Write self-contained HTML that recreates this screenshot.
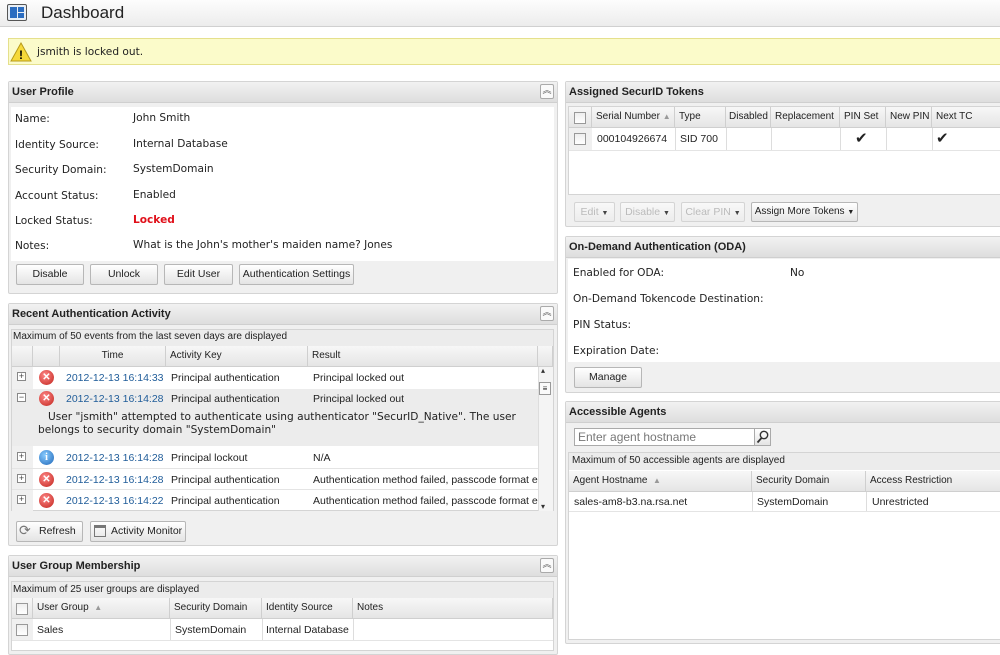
<!DOCTYPE html>
<html><head><meta charset="utf-8"><style>
*{box-sizing:border-box;margin:0;padding:0}
body{width:1000px;height:651px;background:#fff;position:relative;overflow:hidden;font-family:"Liberation Sans",sans-serif;font-size:10.5px;color:#222}
.a{position:absolute}
.v{font-family:"DejaVu Sans",sans-serif;font-size:10.6px}
.panel{position:absolute;border:1px solid #d4d4d4;background:#f0f0f0;border-radius:2px}
.ph{position:absolute;left:0;right:0;top:0;height:21px;background:linear-gradient(#f2f2f2,#dedede);border-bottom:1px solid #cfcfcf;font-weight:bold;font-size:11px;padding:4px 3px;color:#222;white-space:nowrap}
.col{position:absolute;right:3px;top:2px;width:14px;height:15px;border:1px solid #aaa;background:#fafafa;border-radius:2px;font-size:9px;text-align:center;line-height:11px;color:#555}
.btn{position:absolute;height:21px;border:1px solid #b7b7b7;border-radius:2px;background:linear-gradient(#fff,#e4e4e4);text-align:center;line-height:19px;font-size:10.5px;color:#222;white-space:nowrap;overflow:hidden}
.dis{color:#bbb;border-color:#d4d4d4;background:linear-gradient(#f8f8f8,#ececec)}
.th{position:absolute;height:21px;background:linear-gradient(#f7f7f7,#e5e5e5);border-right:1px solid #cfcfcf;border-bottom:1px solid #cfcfcf;line-height:20px;padding-left:4px;white-space:nowrap;overflow:hidden;font-size:10px}
.cb{position:absolute;width:12px;height:12px;border:1px solid #999;background:linear-gradient(#eee,#fff)}
.t{position:absolute;white-space:nowrap}
.lnk{color:#1f5c99}
.x{position:absolute;width:15px;height:15px;border-radius:50%;background:radial-gradient(circle at 40% 35%,#f88,#c0231b);color:#fff;font-size:10px;font-weight:bold;text-align:center;line-height:15px}
.i{position:absolute;width:15px;height:15px;border-radius:50%;background:radial-gradient(circle at 40% 35%,#8cf,#1f66b8);color:#fff;font-size:10px;font-weight:bold;text-align:center;line-height:15px;font-family:"Liberation Serif",serif}
.pm{position:absolute;width:9px;height:9px;border:1px solid #888;background:#fff;font-size:9px;line-height:7px;text-align:center;color:#444}
</style></head><body>
<div class="a" style="left:0;top:0;width:1000px;height:27px;background:linear-gradient(#fdfdfd,#ececec);border-bottom:1px solid #d0d0d0"></div>
<div class="a" style="left:7px;top:4px;width:20px;height:17px;border:1px solid #555;background:#e8eef5;border-radius:2px">
 <div class="a" style="left:2px;top:2px;width:7px;height:11px;background:#2a6cc0"></div>
 <div class="a" style="left:10px;top:2px;width:6px;height:5px;background:#2a6cc0"></div>
 <div class="a" style="left:10px;top:8px;width:6px;height:5px;background:#2a6cc0"></div>
</div>
<div class="t" style="left:41px;top:3px;font-size:17px;color:#222">Dashboard</div>
<div class="a" style="left:8px;top:38px;width:995px;height:27px;background:#fbfbca;border:1px solid #e5e08c"></div>
<svg class="a" style="left:10px;top:42px" width="22" height="20"><path d="M11 1 L21 19 L1 19 Z" fill="#f6d93a" stroke="#b79a1a"/><text x="11" y="17" text-anchor="middle" font-size="12" font-weight="bold" font-family="Liberation Sans">!</text></svg>
<div class="t v" style="left:37px;top:46px">jsmith is locked out.</div>

<div class="panel" style="left:8px;top:81px;width:550px;height:213px">
 <div class="ph">User Profile</div><div class="col">︽</div>
 <div class="a" style="left:2px;top:25px;right:3px;height:154px;background:#fff"></div>
</div>
<div class="t v" style="left:15px;top:113px">Name:</div><div class="t v" style="left:133px;top:112px">John Smith</div>
<div class="t v" style="left:15px;top:139px">Identity Source:</div><div class="t v" style="left:133px;top:138px">Internal Database</div>
<div class="t v" style="left:15px;top:164px">Security Domain:</div><div class="t v" style="left:133px;top:163px">SystemDomain</div>
<div class="t v" style="left:15px;top:190px">Account Status:</div><div class="t v" style="left:133px;top:189px">Enabled</div>
<div class="t v" style="left:15px;top:215px">Locked Status:</div><div class="t v" style="left:133px;top:214px;color:#e0101a;font-weight:bold">Locked</div>
<div class="t v" style="left:15px;top:240px">Notes:</div><div class="t v" style="left:133px;top:239px">What is the John's mother's maiden name? Jones</div>
<div class="btn" style="left:16px;top:264px;width:68px">Disable</div>
<div class="btn" style="left:90px;top:264px;width:68px">Unlock</div>
<div class="btn" style="left:164px;top:264px;width:69px">Edit User</div>
<div class="btn" style="left:239px;top:264px;width:115px">Authentication Settings</div>

<div class="panel" style="left:8px;top:303px;width:550px;height:243px">
 <div class="ph">Recent Authentication Activity</div><div class="col">︽</div>
</div>
<div class="a" style="left:11px;top:329px;width:543px;height:182px;background:#fff;border:1px solid #d4d4d4"></div>
<div class="a" style="left:12px;top:330px;width:541px;height:16px;background:#ececec"></div>
<div class="t" style="left:13px;top:331px;font-size:10px">Maximum of 50 events from the last seven days are displayed</div>
<div class="th" style="left:12px;top:346px;width:21px"></div>
<div class="th" style="left:33px;top:346px;width:27px"></div>
<div class="th" style="left:60px;top:346px;width:106px;text-align:center;padding:0">Time</div>
<div class="th" style="left:166px;top:346px;width:142px">Activity Key</div>
<div class="th" style="left:308px;top:346px;width:230px">Result</div>
<div class="th" style="left:538px;top:346px;width:15px"></div>
<div class="a" style="left:12px;top:367px;width:21px;height:144px;background:#f0f0f0"></div>
<div class="a" style="left:12px;top:389px;width:526px;height:57px;background:#ececec"></div>
<div class="a" style="left:12px;top:468px;width:526px;height:1px;background:#e4e4e4"></div>
<div class="a" style="left:12px;top:489px;width:526px;height:1px;background:#e4e4e4"></div>
<div class="a" style="left:538px;top:367px;width:15px;height:144px;background:#f4f4f4;border-left:1px solid #ddd"></div>
<div class="t" style="left:541px;top:366px;font-size:8px;color:#333">▴</div>
<div class="a" style="left:539px;top:382px;width:12px;height:13px;border:1px solid #999;background:#fafafa;font-size:8px;text-align:center;line-height:11px">≡</div>
<div class="t" style="left:541px;top:502px;font-size:8px;color:#333">▾</div>
<div class="pm" style="left:17px;top:372px">+</div><div class="x" style="left:39px;top:370px">✕</div>
<div class="t lnk" style="left:66px;top:372px">2012-12-13 16:14:33</div><div class="t" style="left:171px;top:372px">Principal authentication</div><div class="t" style="left:313px;top:372px">Principal locked out</div>
<div class="pm" style="left:17px;top:393px">−</div><div class="x" style="left:39px;top:391px">✕</div>
<div class="t lnk" style="left:66px;top:393px">2012-12-13 16:14:28</div><div class="t" style="left:171px;top:393px">Principal authentication</div><div class="t" style="left:313px;top:393px">Principal locked out</div>
<div class="t v" style="left:48px;top:411px">User "jsmith" attempted to authenticate using authenticator "SecurID_Native". The user</div>
<div class="t v" style="left:38px;top:424px">belongs to security domain "SystemDomain"</div>
<div class="pm" style="left:17px;top:452px">+</div><div class="i" style="left:39px;top:450px">i</div>
<div class="t lnk" style="left:66px;top:452px">2012-12-13 16:14:28</div><div class="t" style="left:171px;top:452px">Principal lockout</div><div class="t" style="left:313px;top:452px">N/A</div>
<div class="pm" style="left:17px;top:474px">+</div><div class="x" style="left:39px;top:472px">✕</div>
<div class="t lnk" style="left:66px;top:474px">2012-12-13 16:14:28</div><div class="t" style="left:171px;top:474px">Principal authentication</div><div class="t" style="left:313px;top:474px;width:225px;overflow:hidden">Authentication method failed, passcode format error</div>
<div class="pm" style="left:17px;top:495px">+</div><div class="x" style="left:39px;top:493px">✕</div>
<div class="t lnk" style="left:66px;top:495px">2012-12-13 16:14:22</div><div class="t" style="left:171px;top:495px">Principal authentication</div><div class="t" style="left:313px;top:495px;width:225px;overflow:hidden">Authentication method failed, passcode format error</div>
<div class="btn" style="left:16px;top:521px;width:67px;text-align:left;padding-left:22px">Refresh</div>
<div class="t" style="left:19px;top:522px;font-size:14px;color:#777">⟳</div>
<div class="btn" style="left:90px;top:521px;width:96px;text-align:left;padding-left:20px">Activity Monitor</div>
<div class="a" style="left:94px;top:525px;width:12px;height:12px;border:1px solid #777;border-top-width:3px"></div>

<div class="panel" style="left:8px;top:555px;width:550px;height:100px">
 <div class="ph">User Group Membership</div><div class="col">︽</div>
</div>
<div class="a" style="left:11px;top:581px;width:543px;height:70px;background:#fff;border:1px solid #d4d4d4"></div>
<div class="a" style="left:12px;top:582px;width:541px;height:16px;background:#ececec"></div>
<div class="t" style="left:13px;top:584px;font-size:10px">Maximum of 25 user groups are displayed</div>
<div class="th" style="left:12px;top:598px;width:21px"></div><div class="cb" style="left:16px;top:603px"></div>
<div class="th" style="left:33px;top:598px;width:137px">User Group &nbsp;<span style="color:#999;font-size:8px">▲</span></div>
<div class="th" style="left:170px;top:598px;width:92px">Security Domain</div>
<div class="th" style="left:262px;top:598px;width:91px">Identity Source</div>
<div class="th" style="left:353px;top:598px;width:200px">Notes</div>
<div class="a" style="left:12px;top:619px;width:21px;height:21px;background:#f0f0f0"></div><div class="cb" style="left:16px;top:624px"></div>
<div class="t" style="left:37px;top:624px">Sales</div><div class="t" style="left:175px;top:624px">SystemDomain</div><div class="t" style="left:266px;top:624px">Internal Database</div>
<div class="a" style="left:170px;top:619px;width:1px;height:21px;background:#ddd"></div><div class="a" style="left:262px;top:619px;width:1px;height:21px;background:#ddd"></div><div class="a" style="left:353px;top:619px;width:1px;height:21px;background:#ddd"></div>
<div class="a" style="left:12px;top:640px;width:541px;height:1px;background:#e4e4e4"></div>

<div class="panel" style="left:565px;top:81px;width:440px;height:146px">
 <div class="ph">Assigned SecurID Tokens</div>
</div>
<div class="a" style="left:568px;top:106px;width:440px;height:89px;background:#fff;border:1px solid #d4d4d4"></div>
<div class="th" style="left:569px;top:107px;width:23px"></div><div class="cb" style="left:574px;top:112px"></div>
<div class="th" style="left:592px;top:107px;width:83px">Serial Number <span style="color:#999;font-size:8px">▲</span></div>
<div class="th" style="left:675px;top:107px;width:51px">Type</div>
<div class="th" style="left:726px;top:107px;width:45px;padding-left:3px">Disabled</div>
<div class="th" style="left:771px;top:107px;width:69px">Replacement</div>
<div class="th" style="left:840px;top:107px;width:46px">PIN Set</div>
<div class="th" style="left:886px;top:107px;width:46px">New PIN</div>
<div class="th" style="left:932px;top:107px;width:70px">Next TC</div>
<div class="a" style="left:569px;top:128px;width:23px;height:22px;background:#f0f0f0"></div><div class="cb" style="left:574px;top:133px"></div>
<div class="t" style="left:597px;top:133px">000104926674</div><div class="t" style="left:680px;top:133px">SID 700</div>
<div class="t" style="left:855px;top:129px;font-size:15px;color:#222">✔</div><div class="t" style="left:936px;top:129px;font-size:15px;color:#222">✔</div>
<div class="a" style="left:675px;top:128px;width:1px;height:22px;background:#ddd"></div><div class="a" style="left:726px;top:128px;width:1px;height:22px;background:#ddd"></div><div class="a" style="left:771px;top:128px;width:1px;height:22px;background:#ddd"></div><div class="a" style="left:840px;top:128px;width:1px;height:22px;background:#ddd"></div><div class="a" style="left:886px;top:128px;width:1px;height:22px;background:#ddd"></div><div class="a" style="left:932px;top:128px;width:1px;height:22px;background:#ddd"></div>
<div class="a" style="left:569px;top:150px;width:431px;height:1px;background:#e4e4e4"></div>
<div class="btn dis" style="left:574px;top:202px;width:41px;height:20px;line-height:18px">Edit <span style="color:#444;font-size:7px">▼</span></div>
<div class="btn dis" style="left:620px;top:202px;width:55px;height:20px;line-height:18px">Disable <span style="color:#444;font-size:7px">▼</span></div>
<div class="btn dis" style="left:681px;top:202px;width:64px;height:20px;line-height:18px">Clear PIN <span style="color:#444;font-size:7px">▼</span></div>
<div class="btn" style="left:751px;top:202px;width:107px;height:20px;line-height:18px;font-size:10px">Assign More Tokens <span style="font-size:7px">▼</span></div>

<div class="panel" style="left:565px;top:236px;width:440px;height:157px">
 <div class="ph">On-Demand Authentication (ODA)</div>
</div>
<div class="a" style="left:568px;top:259px;width:440px;height:103px;background:#fff"></div>
<div class="t v" style="left:573px;top:267px">Enabled for ODA:</div><div class="t v" style="left:790px;top:267px">No</div>
<div class="t v" style="left:573px;top:293px">On-Demand Tokencode Destination:</div>
<div class="t v" style="left:573px;top:319px">PIN Status:</div>
<div class="t v" style="left:573px;top:345px">Expiration Date:</div>
<div class="btn" style="left:574px;top:367px;width:68px">Manage</div>

<div class="panel" style="left:565px;top:401px;width:440px;height:243px">
 <div class="ph">Accessible Agents</div>
</div>
<div class="a" style="left:574px;top:428px;width:181px;height:18px;background:#fff;border:1px solid #aaa"></div>
<div class="t" style="left:578px;top:430px;font-size:12px;color:#777">Enter agent hostname</div>
<div class="a" style="left:754px;top:428px;width:17px;height:18px;border:1px solid #aaa;background:linear-gradient(#fff,#e4e4e4)"></div>
<svg class="a" style="left:756px;top:430px" width="13" height="14"><circle cx="8" cy="5" r="3.7" fill="none" stroke="#333" stroke-width="1.4"/><path d="M5.5 8 L1.5 12.5" stroke="#333" stroke-width="1.8"/></svg>
<div class="a" style="left:568px;top:452px;width:440px;height:188px;background:#fff;border:1px solid #d4d4d4"></div>
<div class="a" style="left:569px;top:453px;width:431px;height:17px;background:#ececec"></div>
<div class="t" style="left:572px;top:455px;font-size:10px">Maximum of 50 accessible agents are displayed</div>
<div class="th" style="left:569px;top:471px;width:183px">Agent Hostname &nbsp;<span style="color:#999;font-size:8px">▲</span></div>
<div class="th" style="left:752px;top:471px;width:114px">Security Domain</div>
<div class="th" style="left:866px;top:471px;width:136px">Access Restriction</div>
<div class="t" style="left:574px;top:496px">sales-am8-b3.na.rsa.net</div><div class="t" style="left:757px;top:496px">SystemDomain</div><div class="t" style="left:872px;top:496px">Unrestricted</div>
<div class="a" style="left:752px;top:492px;width:1px;height:19px;background:#ddd"></div><div class="a" style="left:866px;top:492px;width:1px;height:19px;background:#ddd"></div>
<div class="a" style="left:569px;top:511px;width:431px;height:1px;background:#e4e4e4"></div>
</body></html>
